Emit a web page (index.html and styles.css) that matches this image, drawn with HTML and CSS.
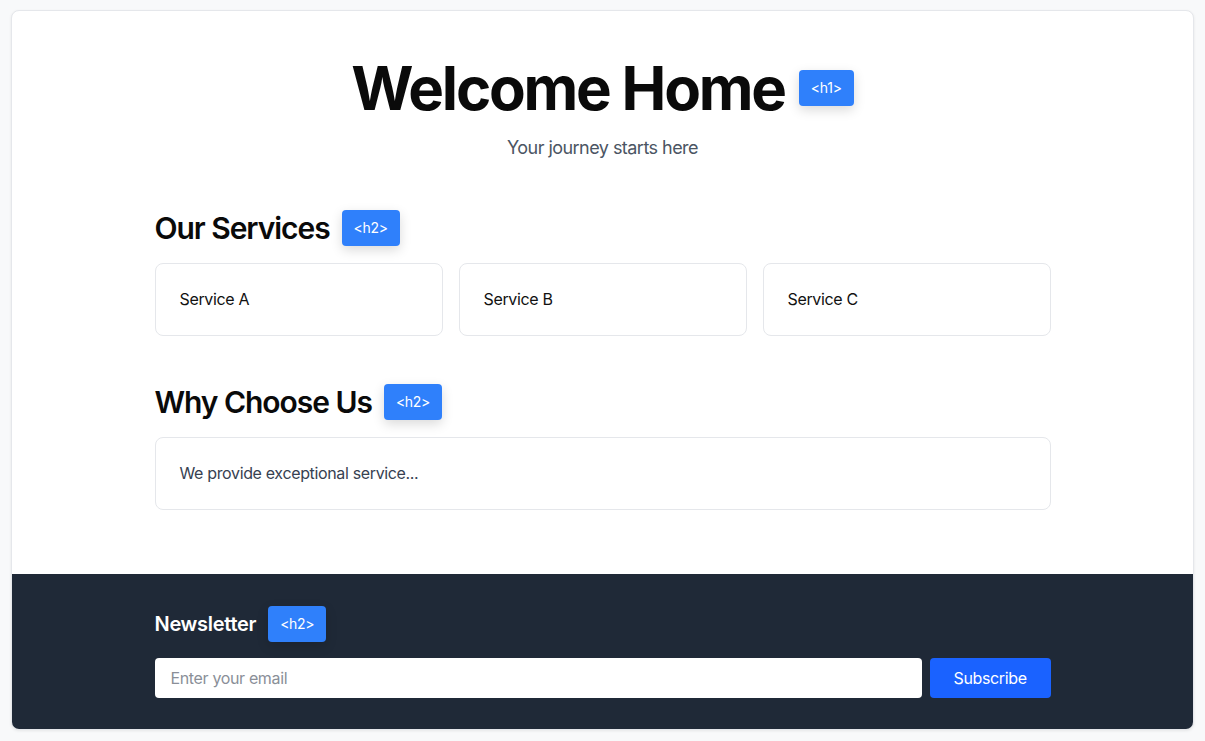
FILE: index.html
```html
<!DOCTYPE html>
<html lang="en">
<head>
<meta charset="utf-8">
<title>Welcome Home</title>
<link rel="stylesheet" href="styles.css">
</head>
<body>
<div class="page">
  <header class="hero">
    <div class="title-row">
      <h1 class="title">Welcome Home</h1>
      <span class="badge">&lt;h1&gt;</span>
    </div>
    <p class="subtitle">Your journey starts here</p>
  </header>
  <main class="main">
    <section class="section">
      <div class="heading-row">
        <h2 class="heading">Our Services</h2>
        <span class="badge">&lt;h2&gt;</span>
      </div>
      <div class="services">
        <div class="box">Service A</div>
        <div class="box">Service B</div>
        <div class="box">Service C</div>
      </div>
    </section>
    <section class="section">
      <div class="heading-row">
        <h2 class="heading">Why Choose Us</h2>
        <span class="badge">&lt;h2&gt;</span>
      </div>
      <div class="box box-muted">We provide exceptional service...</div>
    </section>
  </main>
  <footer class="footer">
    <div class="footer-inner">
      <div class="heading-row footer-row">
        <h2 class="footer-heading">Newsletter</h2>
        <span class="badge">&lt;h2&gt;</span>
      </div>
      <form class="signup">
        <input class="email" type="email" placeholder="Enter your email">
        <button class="subscribe" type="button">Subscribe</button>
      </form>
    </div>
  </footer>
</div>
</body>
</html>
```
FILE: styles.css
```css
* { box-sizing: border-box; }
html, body { margin: 0; }
body {
  background: #f8f9fa;
  padding: 10px 11px;
  font-family: Inter, "Noto Sans", "Liberation Sans", sans-serif;
  color: #0a0a0a;
  letter-spacing: -0.022em;
}
.page {
  background: #fff;
  border: 1px solid #e5e7eb;
  border-radius: 8px;
  box-shadow: 0 1px 3px rgba(0,0,0,0.08);
  overflow: hidden;
  height: 720px;
  display: flex;
  flex-direction: column;
}
.hero {
  padding-top: 47px;
  text-align: center;
}
.title-row {
  display: flex;
  justify-content: center;
  align-items: center;
  gap: 14px;
}
.title {
  margin: 0;
  font-size: 60px;
  line-height: 60px;
  font-weight: 700;
  letter-spacing: -0.037em;
}
.subtitle {
  margin: 16px 0 0;
  font-size: 18px;
  line-height: 28px;
  color: #4b5563;
  letter-spacing: -0.03em;
}
.badge {
  display: inline-block;
  background: #2f80fb;
  color: #fff;
  font-size: 14px;
  line-height: 20px;
  padding: 8px 12px;
  border-radius: 4px;
  box-shadow: 0 4px 12px rgba(0,0,0,0.15);
  font-weight: 400;
  letter-spacing: -0.02em;
}
.main {
  width: 896px;
  margin: 48px auto 0;
  flex: 1;
}
.section + .section { margin-top: 48px; }
.heading-row {
  display: flex;
  align-items: center;
  gap: 12px;
  margin-bottom: 17px;
}
.heading {
  margin: 0;
  font-size: 30px;
  line-height: 36px;
  font-weight: 600;
  letter-spacing: -0.035em;
}
.services {
  display: grid;
  grid-template-columns: repeat(3, 1fr);
  gap: 16px;
}
.box {
  border: 1px solid #e5e7eb;
  border-radius: 8px;
  padding: 24px;
  font-size: 16px;
  line-height: 23px;
  color: #111;
}
.box-muted { color: #374151; }
.footer {
  background: #1f2937;
  padding: 32px 0 31px;
}
.footer-inner {
  width: 896px;
  margin: 0 auto;
}
.footer-row { margin-bottom: 16px; }
.footer-heading {
  margin: 0;
  font-size: 20px;
  line-height: 28px;
  font-weight: 600;
  color: #fff;
  letter-spacing: -0.015em;
}
.signup {
  display: flex;
  gap: 8px;
  margin: 0;
}
.email {
  flex: 1;
  height: 40px;
  border: 0;
  border-radius: 4px;
  padding: 0 16px;
  font-family: inherit;
  font-size: 16px;
  letter-spacing: -0.022em;
  color: #111;
  background: #fff;
  outline: none;
}
.email::placeholder { color: #8a8f98; }
.subscribe {
  height: 40px;
  border: 0;
  border-radius: 4px;
  background: #1a62ff;
  color: #fff;
  font-family: inherit;
  font-size: 16px;
  letter-spacing: -0.022em;
  padding: 0 24px;
  width: 121px;
}
```
